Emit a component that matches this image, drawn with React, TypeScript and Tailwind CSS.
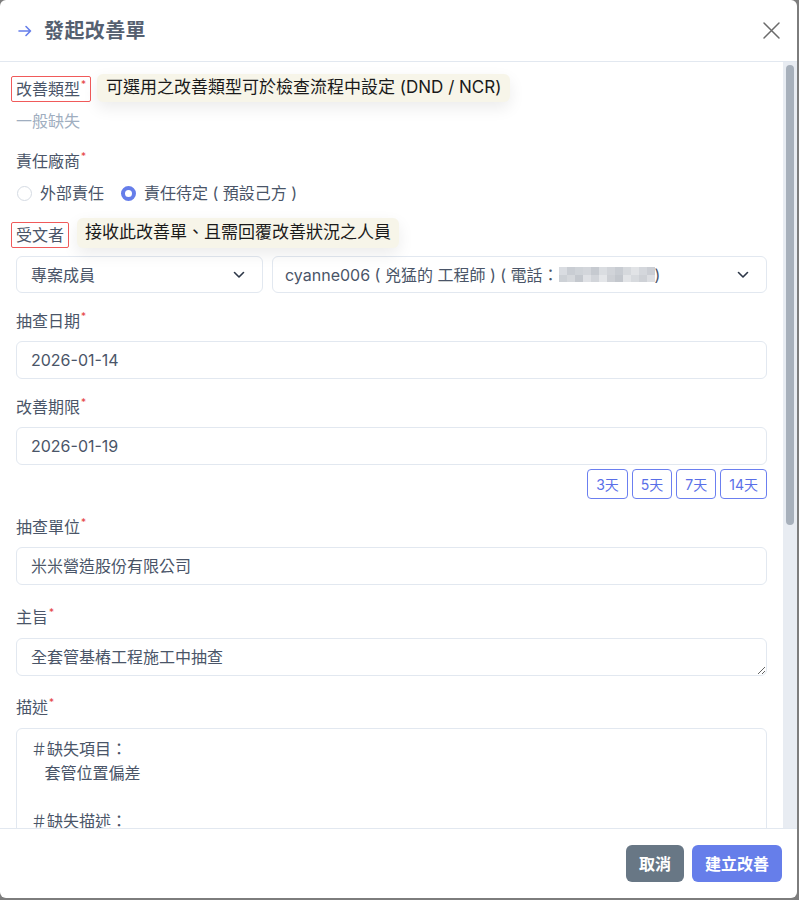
import React from 'react';

const Req = () => <span className="text-[#e53e3e] text-[10px] align-top leading-none relative top-[2px] ml-[1px]">*</span>;

const Label = ({ children, req = true }: { children: React.ReactNode; req?: boolean }) => (
  <div className="text-[16px] leading-[24px] text-[#4a5568]">
    {children}
    {req && <Req />}
  </div>
);

const Chevron = () => (
  <svg width="12" height="8" viewBox="0 0 12 8" fill="none" stroke="#2d3748" strokeWidth="1.6" strokeLinecap="round" strokeLinejoin="round">
    <path d="M1.5 1.5 6 6l4.5-4.5" />
  </svg>
);

const inputCls =
  'w-full h-[38px] rounded-md border border-[#e2e8f0] bg-white px-[14px] flex items-center text-[16px] text-[#4a5568]';

// pixelated (blurred) phone number
const blur = [
  '#d9dce1', '#c9cdd3', '#cfd3d8', '#d3d6db', '#c6cad0', '#dadde1', '#d1d4d9', '#c8ccd2', '#d6d9dd', '#e1e3e6', '#d4d7dc', '#cbced4',
  '#cdd1d6', '#d5d8dc', '#c4c8ce', '#dfe1e5', '#d2d5da', '#e4e6e9', '#cdd0d5', '#c3c7cd', '#e2e4e7', '#d7dade', '#ced1d6', '#dcdee2',
];

export default function App() {
  return (
    <div className="w-[799px] h-[900px] bg-[#7d7d7d] font-['Inter','Noto_Sans_CJK_TC',sans-serif]">
      <div className="w-[797px] h-[898px] bg-white rounded-md flex flex-col overflow-hidden">
        {/* header */}
        <div className="h-[62px] shrink-0 border-b border-[#e2e8f0] flex items-center pl-[17px] pr-[16px]">
          <svg width="16" height="16" viewBox="0 0 16 16" fill="none" stroke="#667eea" strokeWidth="1.6" strokeLinecap="round" strokeLinejoin="round">
            <path d="M2 8h11.5M9 3.5 13.5 8 9 12.5" />
          </svg>
          <div className="ml-[11px] text-[20px] font-bold text-[#556070] tracking-[0.4px]">發起改善單</div>
          <svg className="ml-auto" width="19" height="19" viewBox="0 0 19 19" fill="none" stroke="#6b6b6b" strokeWidth="1.5" strokeLinecap="round">
            <path d="M2 2l15 15M17 2 2 17" />
          </svg>
        </div>

        {/* body */}
        <div className="flex-1 min-h-0 flex">
          <div className="flex-1 min-w-0 overflow-hidden pl-4 pr-[16px]">
            <div className="pt-[14px]">
              <div className="relative inline-block -ml-[5px] border border-[#f05a5a] rounded-[2px] px-[4px]">
                <Label>改善類型</Label>
                <div className="absolute left-full top-[-3px] ml-[7px] whitespace-nowrap rounded-md bg-[#f7f5e9] px-[9px] h-[28px] flex items-center text-[17px] text-[#1a1a1a] shadow-[0_6px_16px_rgba(0,0,0,0.08)]">
                  可選用之改善類型可於檢查流程中設定 (DND / NCR)
                </div>
              </div>
              <div className="mt-[7px] text-[16px] leading-[24px] text-[#a0aec0]">一般缺失</div>
            </div>

            <div className="mt-[16px]">
              <Label>責任廠商</Label>
              <div className="mt-[8px] flex items-center h-[24px] text-[16px] text-[#4a5568]">
                <span className="w-[15px] h-[15px] rounded-full border border-[#d5dbe3] ml-[1px]" />
                <span className="ml-[8px]">外部責任</span>
                <span className="ml-[17px] w-[15px] h-[15px] rounded-full border-[4.5px] border-[#667eea] bg-white" />
                <span className="ml-[8px]">責任待定 ( 預設己方 )</span>
              </div>
            </div>

            <div className="mt-[17px]">
              <div className="relative inline-block -ml-[5px] border border-[#f05a5a] rounded-[2px] px-[4px]">
                <Label req={false}>受文者</Label>
                <div className="absolute left-full top-[-5px] ml-[9px] whitespace-nowrap rounded-md bg-[#f7f5e9] px-[8px] h-[30px] flex items-center text-[17px] text-[#1a1a1a] shadow-[0_6px_16px_rgba(0,0,0,0.08)]">
                  接收此改善單、且需回覆改善狀況之人員
                </div>
              </div>
              <div className="mt-[8px] flex gap-[9px]">
                <div className="w-[247px] h-[37px] rounded-md border border-[#e2e8f0] pl-[14px] pr-[17px] flex items-center justify-between text-[16px] text-[#4a5568]">
                  <span>專案成員</span>
                  <Chevron />
                </div>
                <div className="flex-1 h-[37px] rounded-md border border-[#e2e8f0] pl-[12px] pr-[17px] flex items-center justify-between text-[16px] text-[#4a5568]">
                  <span className="flex items-center">
                    cyanne006 ( 兇猛的 工程師 ) ( 電話：
                    <span className="grid grid-cols-12 w-[96px] h-[15px]">
                      {blur.map((c, i) => (
                        <span key={i} style={{ backgroundColor: c }} />
                      ))}
                    </span>
                    )
                  </span>
                  <Chevron />
                </div>
              </div>
            </div>

            <div className="mt-[16px]">
              <Label>抽查日期</Label>
              <div className={`mt-[8px] ${inputCls}`}>2026-01-14</div>
            </div>

            <div className="mt-[16px]">
              <Label>改善期限</Label>
              <div className={`mt-[8px] ${inputCls}`}>2026-01-19</div>
              <div className="mt-[4px] flex justify-end gap-[4px]">
                {['3天', '5天', '7天', '14天'].map((d) => (
                  <button key={d} className="h-[30px] px-[8px] rounded-[4px] border border-[#6b7ff0] text-[14px] text-[#5a6fe8] bg-white">
                    {d}
                  </button>
                ))}
              </div>
            </div>

            <div className="mt-[16px]">
              <Label>抽查單位</Label>
              <div className={`mt-[8px] ${inputCls}`}>米米營造股份有限公司</div>
            </div>

            <div className="mt-[20px]">
              <Label>主旨</Label>
              <textarea
                readOnly
                defaultValue="全套管基樁工程施工中抽查"
                className="mt-[9px] block w-full h-[38px] rounded-md border border-[#e2e8f0] px-[14px] py-[6px] text-[16px] leading-[24px] text-[#4a5568] outline-none overflow-hidden"
              />
            </div>

            <div className="mt-[19px] pb-[30px]">
              <Label>描述</Label>
              <textarea
                readOnly
                defaultValue={'＃缺失項目：\n   套管位置偏差\n\n＃缺失描述：\n   全套管施工時套管中心與樁位偏移\n'}
                className="mt-[9px] block w-full h-[520px] rounded-md border border-[#e2e8f0] px-[14px] py-[8px] text-[16px] leading-[24px] text-[#4a5568] outline-none resize-none"
              />
            </div>
          </div>

          {/* scrollbar */}
          <div className="w-[14px] shrink-0 bg-[#e8ecf2] pt-[3px] px-[3px]">
            <div className="h-[460px] rounded-full bg-[#a7b0bb]" />
          </div>
        </div>

        {/* footer */}
        <div className="h-[70px] shrink-0 border-t border-[#e2e8f0] flex items-center justify-end gap-[8px] pr-[15px]">
          <button className="h-[37px] w-[58px] rounded-md bg-[#687785] text-white text-[16px] font-bold">取消</button>
          <button className="h-[37px] w-[90px] rounded-md bg-[#667eea] text-white text-[16px] font-bold">建立改善</button>
        </div>
      </div>
    </div>
  );
}
